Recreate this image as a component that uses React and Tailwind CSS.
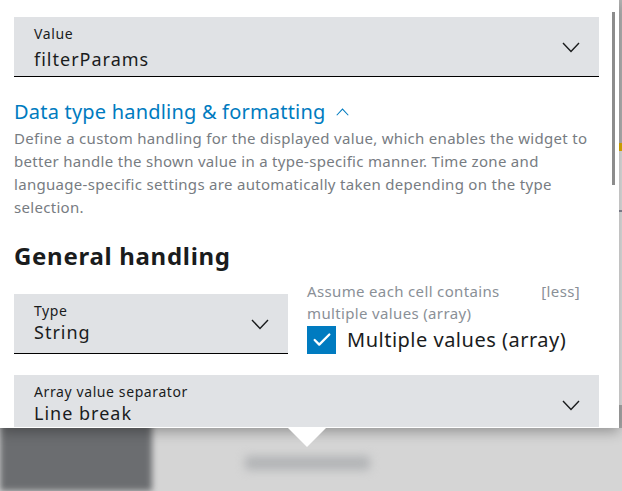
import { Check } from 'lucide-react';

function Chevron({ up = false, className = '' }) {
  return (
    <svg viewBox="0 0 18 11" className={className} fill="none" stroke="currentColor" strokeWidth="1.4">
      <polyline points={up ? '1,10 9,1.5 17,10' : '1,1 9,9.5 17,1'} />
    </svg>
  );
}

function SelectField({ label, value, className = '', valueGap = '', cut = false }) {
  return (
    <div
      className={`flex items-start justify-between bg-[#e0e2e5] pl-[20px] pr-[19px] ${
        cut ? 'h-[52px]' : 'border-b border-black'
      } ${className}`}
    >
      <div className="flex flex-col pt-[8px]">
        <span className="text-[14px] leading-[18px] tracking-[0.6px] text-[#1a1c1d]">{label}</span>
        <span className={`text-[18px] leading-[24px] tracking-[1px] text-[#1a1c1d] ${valueGap}`}>{value}</span>
      </div>
      <Chevron className="mt-[25px] h-[11px] w-[18px] text-[#1a1c1d]" />
    </div>
  );
}

export default function App() {
  return (
    <div
      className="relative w-[622px] h-[491px] overflow-hidden bg-[#d5d5d5]"
      style={{ fontFamily: '"Noto Sans", sans-serif' }}
    >
      {/* page behind the popover */}
      <div className="absolute left-0 top-0 w-[152px] h-full bg-[#6b6d70] blur-[3px]" />
      <div className="absolute left-[245px] top-[456px] w-[125px] h-[14px] rounded bg-[#b2b4b6] blur-[5px]" />
      <div className="absolute right-0 top-0 w-[3px] h-[143px] bg-[#b4b4b4]" />
      <div className="absolute right-0 top-[143px] w-[3px] h-[8px] bg-[#e1b000]" />
      <div className="absolute right-0 top-[151px] w-[3px] h-[254px] bg-[#e2e2e2]" />
      <div className="absolute right-0 top-[210px] w-[3px] h-[2px] bg-[#8a8a99]" />
      <div className="absolute right-0 top-[405px] w-[3px] h-[23px] bg-[#aaaaaa]" />

      {/* popover */}
      <div className="absolute left-0 top-0 w-[619px] h-[428px] bg-white shadow-[0_4px_12px_rgba(0,0,0,0.3)]">
        <div className="h-full overflow-hidden pl-[14px] pr-[20px] pt-[17px]">
          <SelectField label="Value" value="filterParams" valueGap="mt-[4px] pb-[5px]" />

          <div className="mt-[22px] flex items-center gap-[10px] text-[20px] leading-[26px] tracking-[0.2px] text-[#007bc0]">
            Data type handling &amp; formatting
            <Chevron up className="h-[8px] w-[13px]" />
          </div>
          <p className="mt-[2px] text-[15px] leading-[23px] tracking-[0.3px] text-[#777c82]">
            Define a custom handling for the displayed value, which enables the widget to better handle
            the shown value in a type-specific manner. Time zone and language-specific settings are
            automatically taken depending on the type selection.
          </p>

          <h2 className="mt-[22px] text-[24px] leading-[30px] tracking-[0.7px] font-bold text-[#1a1c1d]">
            General handling
          </h2>

          <div className="mt-[9px] flex gap-[19px]">
            <SelectField label="Type" value="String" valueGap="pb-[9px]" className="w-[274px] mt-[14px]" />
            <div className="w-[273px]">
              <div className="flex justify-between text-[15px] leading-[22px] tracking-[0.35px] text-[#8a9097]">
                <span>Assume each cell contains</span>
                <span>[less]</span>
              </div>
              <div className="text-[15px] leading-[22px] tracking-[0.35px] text-[#8a9097]">multiple values (array)</div>
              <label className="mt-[2px] flex items-center gap-[11px]">
                <span className="flex h-[28px] w-[29px] items-center justify-center bg-[#007bc0]">
                  <Check className="h-[22px] w-[22px] text-white" strokeWidth={2.5} />
                </span>
                <span className="text-[20px] leading-[28px] tracking-[0.5px] text-[#1a1c1d]">
                  Multiple values (array)
                </span>
              </label>
            </div>
          </div>

          <SelectField label="Array value separator" value="Line break" className="mt-[21px]" cut />
        </div>

        {/* scrollbar */}
        <div className="absolute right-[4px] top-[12px] w-[3px] h-[173px] bg-[#8c8c8c]" />

        {/* arrow */}
        <div className="absolute left-[288px] top-[428px] h-0 w-0 border-l-[19px] border-r-[19px] border-t-[19px] border-l-transparent border-r-transparent border-t-white" />
      </div>
    </div>
  );
}
